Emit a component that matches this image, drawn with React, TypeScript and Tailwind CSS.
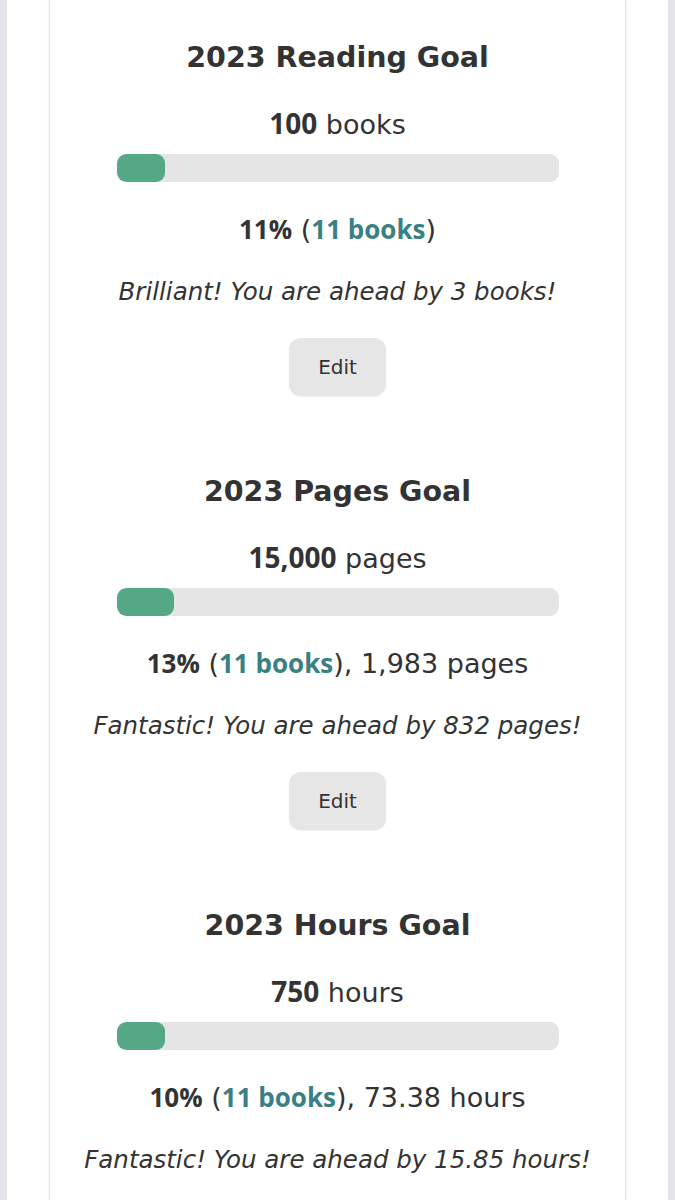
import React from "react";

type Goal = {
  title: string;
  target: string;
  unit: string;
  pct: number;
  extra?: string;
  message: string;
};

const GOALS: Goal[] = [
  {
    title: "2023 Reading Goal",
    target: "100",
    unit: "books",
    pct: 11,
    message: "Brilliant! You are ahead by 3 books!",
  },
  {
    title: "2023 Pages Goal",
    target: "15,000",
    unit: "pages",
    pct: 13,
    extra: "1,983 pages",
    message: "Fantastic! You are ahead by 832 pages!",
  },
  {
    title: "2023 Hours Goal",
    target: "750",
    unit: "hours",
    pct: 10,
    extra: "73.38 hours",
    message: "Fantastic! You are ahead by 15.85 hours!",
  },
];

// bold inline figures read narrower than DejaVu Bold, so they get Open Sans
const boldFont = "font-['Open_Sans',sans-serif] font-bold leading-none";

function GoalBlock({ goal }: { goal: Goal }) {
  return (
    <div className="flex flex-col items-center">
      <h2 className="h-[36px] text-[28.5px] leading-[36px] font-semibold text-[#333333]">{goal.title}</h2>
      <p className="mt-[33px] h-[32px] text-[27px] leading-[32px] text-[#333333]">
        <span className={`${boldFont} text-[28px]`}>{goal.target}</span> {goal.unit}
      </p>
      <div className="mt-[13px] w-[442px] h-[28px] rounded-[9px] bg-[#e5e5e5] overflow-hidden">
        <div className="h-full rounded-[9px] bg-[#55a886]" style={{ width: `${Math.max(goal.pct, 11)}%` }} />
      </div>
      <p className="mt-[32px] h-[32px] text-[27px] leading-[32px] text-[#333333]">
        <span className={`${boldFont} text-[26px]`}>{goal.pct}%</span> (
        <span className={`${boldFont} text-[26px] text-[#3a7f83]`}>11 books</span>)
        {goal.extra ? `, ${goal.extra}` : ""}
      </p>
      <p className="mt-[31px] h-[30px] text-[24.5px] leading-[30px] italic text-[#333333]">{goal.message}</p>
      <button className="mt-[31px] w-[97px] h-[58px] rounded-[12px] bg-[#e6e6e6] text-[20px] font-medium text-[#333333] shadow-[0_1px_2px_rgba(0,0,0,0.06)]">
        Edit
      </button>
    </div>
  );
}

export default function App() {
  return (
    <div
      className="w-full h-[1200px] overflow-hidden bg-[#e3e3e9] px-[7px]"
      style={{ fontFamily: '"DejaVu Sans", "Noto Sans", sans-serif' }}
    >
      <div className="h-full bg-white px-[42px]">
        <div className="h-full bg-white border-x border-[#e2e2e2] shadow-[0_0_3px_rgba(0,0,0,0.06)] pt-[40px] flex flex-col gap-[78px]">
          {GOALS.map((g) => (
            <GoalBlock key={g.title} goal={g} />
          ))}
        </div>
      </div>
    </div>
  );
}
